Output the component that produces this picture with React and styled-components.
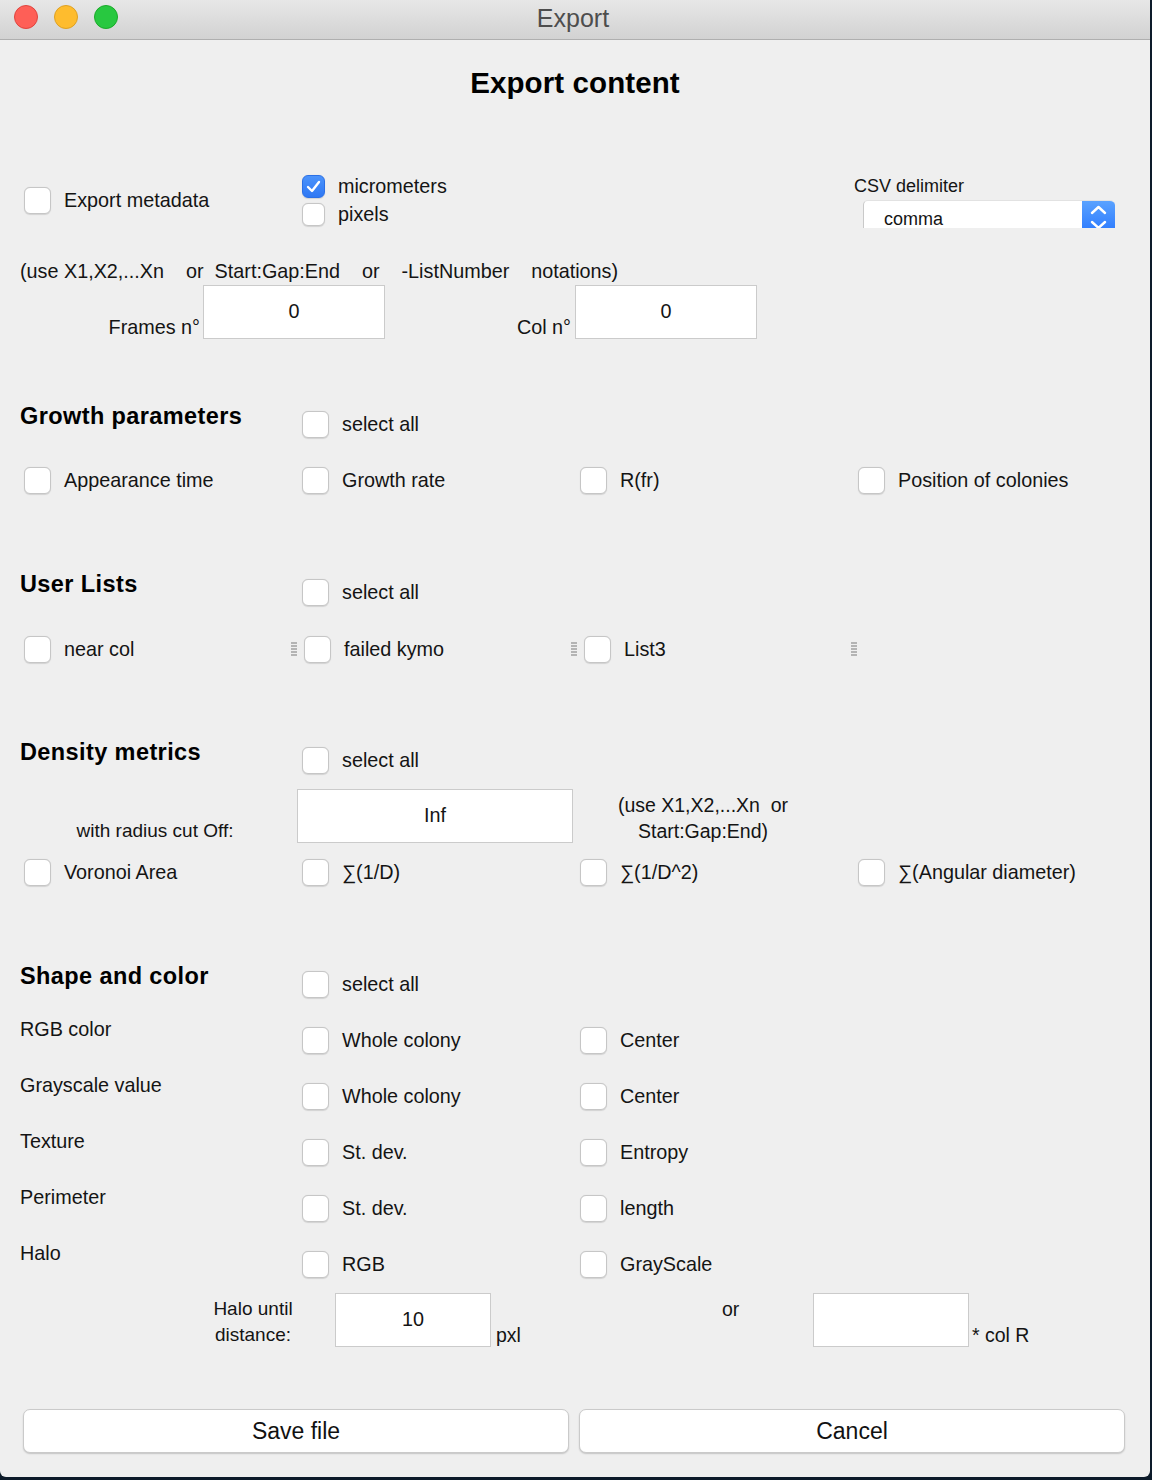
import React from 'react'
import styled, { createGlobalStyle } from 'styled-components'

const GlobalStyle = createGlobalStyle`
   html, body {
      margin: 0;
      padding: 0;
      background: #0d1b2a;
   }
   body {
      font-family: 'Liberation Sans', Arial, sans-serif;
      color: #111;
   }
`

const Check = ({ label, checked, small, ml = 4 }) => (
   <CheckItem $ml={ml}>
      <Box $small={small} $checked={checked}>
         {checked && (
            <svg width="15" height="13" viewBox="0 0 15 13">
               <polyline points="2,7 6,11 13,2" fill="none" stroke="#fff" strokeWidth="2.4" strokeLinecap="round" strokeLinejoin="round" />
            </svg>
         )}
      </Box>
      <CheckLabel>{label}</CheckLabel>
   </CheckItem>
)

const shapeRows = [
   ['RGB color', 'Whole colony', 'Center'],
   ['Grayscale value', 'Whole colony', 'Center'],
   ['Texture', 'St. dev.', 'Entropy'],
   ['Perimeter', 'St. dev.', 'length'],
   ['Halo', 'RGB', 'GrayScale']
]

const App = () => (
   <React.Fragment>
      <GlobalStyle />
      <Window>
         <TitleBar>
            <Lights>
               <Light $bg="#fe5f57" $edge="#e0443e" />
               <Light $bg="#febc2e" $edge="#dea123" />
               <Light $bg="#28c840" $edge="#1aab29" />
            </Lights>
            <WinTitle>Export</WinTitle>
         </TitleBar>

         <Heading>Export content</Heading>

         <Cols $mt={69} $h={56}>
            <Slot $align="center">
               <Check label="Export metadata" />
            </Slot>
            <Slot>
               <Check small checked label="micrometers" />
               <Check small label="pixels" />
            </Slot>
            <Slot />
            <Slot>
               <SmallLabel>CSV delimiter</SmallLabel>
               <SelectClip>
                  <SelectValue>comma</SelectValue>
                  <SelectArrow>
                     <svg width="33" height="40" viewBox="0 0 33 40">
                        <polyline points="10,12 16.5,6 23,12" fill="none" stroke="#fff" strokeWidth="2.4" strokeLinecap="round" strokeLinejoin="round" />
                        <polyline points="10,21 16.5,27 23,21" fill="none" stroke="#fff" strokeWidth="2.4" strokeLinecap="round" strokeLinejoin="round" />
                     </svg>
                  </SelectArrow>
               </SelectClip>
            </Slot>
         </Cols>

         <Notation>{'(use X1,X2,...Xn    or  Start:Gap:End    or    -ListNumber    notations)'}</Notation>

         <FieldRow $mt={3}>
            <FieldLabel $w={180}>Frames n°</FieldLabel>
            <Field $ml={3} $w={182}>0</Field>
            <FieldLabel $w={186}>Col n°</FieldLabel>
            <Field $ml={4} $w={182}>0</Field>
         </FieldRow>

         <SectionHead $mt={61}>
            <HeadTitle>Growth parameters</HeadTitle>
            <Check label="select all" />
         </SectionHead>
         <Cols $mt={26} $h={28}>
            <Check label="Appearance time" />
            <Check label="Growth rate" />
            <Check label="R(fr)" />
            <Check label="Position of colonies" />
         </Cols>

         <SectionHead $mt={74}>
            <HeadTitle>User Lists</HeadTitle>
            <Check label="select all" />
         </SectionHead>
         <ListRow>
            {['near col', 'failed kymo', 'List3'].map(name => (
               <ListCell key={name}>
                  <Check label={name} ml={0} />
                  <Grip />
               </ListCell>
            ))}
         </ListRow>

         <SectionHead $mt={73}>
            <HeadTitle>Density metrics</HeadTitle>
            <Check label="select all" />
         </SectionHead>
         <FieldRow $mt={13}>
            <CenteredLabel $w={278}>with radius cut Off:</CenteredLabel>
            <Field $ml={-1} $w={276}>Inf</Field>
            <Note>
               (use X1,X2,...Xn&nbsp;&nbsp;or
               <br />
               Start:Gap:End)
            </Note>
         </FieldRow>
         <Cols $mt={15} $h={28}>
            <Check label="Voronoi Area" />
            <Check label="∑(1/D)" />
            <Check label="∑(1/D^2)" />
            <Check label="∑(Angular diameter)" />
         </Cols>

         <SectionHead $mt={74}>
            <HeadTitle>Shape and color</HeadTitle>
            <Check label="select all" />
         </SectionHead>
         {shapeRows.map(([name, a, b], i) => (
            <ShapeRow key={name + i} $mt={i === 0 ? 15 : 14}>
               <RowLabel>{name}</RowLabel>
               <Check label={a} />
               <Check label={b} />
            </ShapeRow>
         ))}

         <FieldRow $mt={12}>
            <TwoLine $ml={190} $w={86}>
               Halo until
               <br />
               distance:
            </TwoLine>
            <Field $ml={39} $w={156}>10</Field>
            <Unit $ml={5} $w={226} $end>pxl</Unit>
            <Unit $w={91}>or</Unit>
            <Field $w={156} />
            <Unit $ml={3} $w={100} $end>* col R</Unit>
         </FieldRow>

         <Buttons>
            <Button>Save file</Button>
            <Button>Cancel</Button>
         </Buttons>
      </Window>
   </React.Fragment>
)

export default App

const Window = styled.div`
   width: 1150px;
   height: 1477px;
   background: #efefef;
   border-radius: 0 0 6px 6px;
   overflow: hidden;
   display: flex;
   flex-direction: column;
`

const TitleBar = styled.div`
   position: relative;
   height: 39px;
   flex: none;
   background: linear-gradient(#e7e7e7, #d2d2d2);
   border-bottom: 1px solid #afafaf;
   display: flex;
   align-items: center;
   justify-content: center;
`

const Lights = styled.div`
   position: absolute;
   left: 14px;
   top: 5px;
   display: flex;
   gap: 16px;
`

const Light = styled.span`
   width: 22px;
   height: 22px;
   border-radius: 50%;
   background: ${({ $bg }) => $bg};
   border: 1px solid ${({ $edge }) => $edge};
`

const WinTitle = styled.div`
   font-size: 25px;
   color: #4d4d4d;
   margin-top: -2px;
   margin-left: -4px;
`

const Heading = styled.h1`
   margin: 23px 0 0;
   height: 40px;
   line-height: 40px;
   font-size: 29.5px;
   font-weight: 700;
   letter-spacing: 0.1px;
   text-align: center;
   color: #000;
`

const Cols = styled.div`
   display: grid;
   grid-template-columns: repeat(4, 278px);
   padding-left: 20px;
   margin-top: ${({ $mt }) => $mt}px;
   height: ${({ $h }) => $h}px;
   align-items: center;
`

const Slot = styled.div`
   display: flex;
   flex-direction: column;
   align-self: ${({ $align }) => $align || 'stretch'};
`

const CheckItem = styled.div`
   display: flex;
   align-items: center;
   gap: 13px;
   height: 28px;
   margin-left: ${({ $ml }) => $ml}px;
`

const Box = styled.span`
   box-sizing: border-box;
   flex: none;
   width: ${({ $small }) => ($small ? 23 : 27)}px;
   height: ${({ $small }) => ($small ? 23 : 27)}px;
   border-radius: 6px;
   display: flex;
   align-items: center;
   justify-content: center;
   background: ${({ $checked }) => ($checked ? 'linear-gradient(#4b93fb, #2f78f4)' : '#fff')};
   border: 1px solid ${({ $checked }) => ($checked ? '#2b70e6' : '#c6c6c6')};
   box-shadow: 0 0.5px 1px rgba(0, 0, 0, 0.12);
`

const CheckLabel = styled.span`
   font-size: 19.8px;
   white-space: nowrap;
   color: #141414;
`

const SmallLabel = styled.div`
   font-size: 18px;
   line-height: 28px;
   color: #141414;
`

const SelectClip = styled.div`
   box-sizing: border-box;
   margin-left: 9px;
   width: 252px;
   height: 28px;
   overflow: hidden;
   display: flex;
   background: #fff;
   border-left: 1px solid #c9c9c9;
   border-top: 1px solid #e2e2e2;
   border-radius: 5px 5px 0 0;
`

const SelectValue = styled.div`
   flex: 1;
   padding-left: 20px;
   padding-top: 8px;
   font-size: 18px;
   color: #141414;
`

const SelectArrow = styled.div`
   width: 33px;
   height: 40px;
   flex: none;
   background: linear-gradient(#5aa2ff, #1f6ffe);
`

const Notation = styled.div`
   margin-top: 32px;
   padding-left: 20px;
   height: 22px;
   line-height: 22px;
   font-size: 19.8px;
   white-space: pre;
   color: #141414;
`

const FieldRow = styled.div`
   display: flex;
   height: 54px;
   margin-top: ${({ $mt }) => $mt}px;
   padding-left: 20px;
`

const FieldLabel = styled.div`
   width: ${({ $w }) => $w}px;
   align-self: flex-end;
   margin-bottom: 1px;
   line-height: 22px;
   font-size: 19.8px;
   text-align: right;
   color: #141414;
`

const CenteredLabel = styled(FieldLabel)`
   text-align: center;
   padding-right: 8px;
   box-sizing: border-box;
   font-size: 19px;
`

const Field = styled.div`
   box-sizing: border-box;
   width: ${({ $w }) => $w}px;
   margin-left: ${({ $ml }) => $ml || 0}px;
   height: 54px;
   background: #fff;
   border: 1px solid #cbcbcb;
   display: flex;
   align-items: center;
   justify-content: center;
   padding-bottom: 2px;
   font-size: 19.8px;
   color: #141414;
`

const Note = styled.div`
   margin-left: 38px;
   width: 184px;
   padding-top: 3px;
   line-height: 26px;
   font-size: 19.5px;
   text-align: center;
   color: #141414;
`

const TwoLine = styled.div`
   margin-left: ${({ $ml }) => $ml}px;
   width: ${({ $w }) => $w}px;
   padding-top: 3px;
   line-height: 26px;
   font-size: 19px;
   text-align: center;
   color: #141414;
`

const Unit = styled.div`
   width: ${({ $w }) => $w}px;
   margin-left: ${({ $ml }) => $ml || 0}px;
   align-self: ${({ $end }) => ($end ? 'flex-end' : 'flex-start')};
   margin-bottom: ${({ $end }) => ($end ? 1 : 0)}px;
   padding-top: ${({ $end }) => ($end ? 0 : 5)}px;
   line-height: 22px;
   font-size: 19.5px;
   color: #141414;
`

const SectionHead = styled.div`
   display: grid;
   grid-template-columns: repeat(4, 278px);
   padding-left: 20px;
   height: 40px;
   margin-top: ${({ $mt }) => $mt}px;
   align-items: start;
   & > :nth-child(2) {
      margin-top: 10px;
   }
`

const HeadTitle = styled.h2`
   margin: 0;
   line-height: 32px;
   font-size: 23.5px;
   font-weight: 700;
   letter-spacing: 0.4px;
   white-space: nowrap;
   color: #000;
`

const ListRow = styled.div`
   display: grid;
   grid-template-columns: repeat(3, 280px);
   padding-left: 24px;
   margin-top: 27px;
   height: 28px;
`

const ListCell = styled.div`
   display: flex;
   align-items: center;
   padding-right: 7px;
`

const Grip = styled.span`
   margin-left: auto;
   width: 6px;
   height: 15px;
   background: repeating-linear-gradient(#b4b4b4 0 2px, transparent 2px 3px);
`

const ShapeRow = styled.div`
   display: grid;
   grid-template-columns: repeat(3, 278px);
   padding-left: 20px;
   height: 42px;
   margin-top: ${({ $mt }) => $mt}px;
   align-items: start;
   & > :not(:first-child) {
      margin-top: 11px;
   }
`

const RowLabel = styled.div`
   line-height: 28px;
   font-size: 19.8px;
   color: #141414;
`

const Buttons = styled.div`
   display: flex;
   gap: 10px;
   margin-top: 62px;
   padding-left: 23px;
`

const Button = styled.button`
   width: 546px;
   height: 44px;
   background: #fff;
   border: 1px solid #cacaca;
   border-radius: 7px;
   box-shadow: 0 1px 1.5px rgba(0, 0, 0, 0.18);
   font-family: 'Liberation Sans', Arial, sans-serif;
   font-size: 23px;
   color: #111;
   padding: 0;
`
